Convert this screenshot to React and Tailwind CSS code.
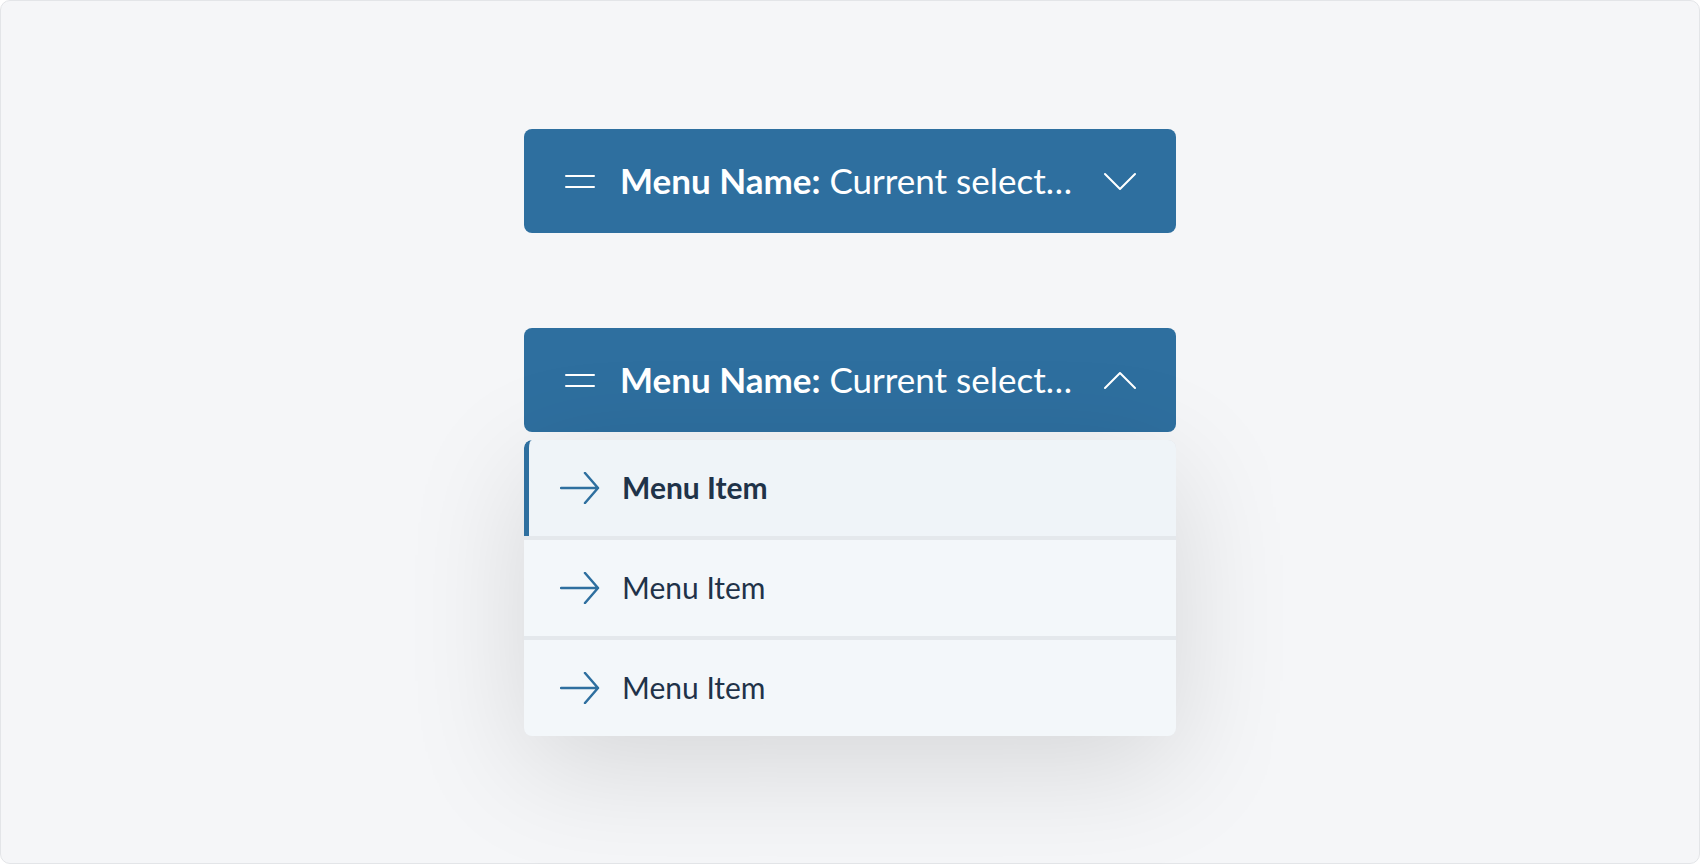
import React from 'react';

const font = { fontFamily: 'Lato, "Open Sans", sans-serif' };

const Hamburger = () => (
  <svg width="32" height="32" viewBox="0 0 32 32" className="shrink-0">
    <path d="M2 11H30M2 22H30" stroke="white" strokeWidth="2" strokeLinecap="round" />
  </svg>
);

const Chevron = ({ up }) => (
  <svg width="32" height="32" viewBox="0 0 32 32" className="shrink-0">
    <path
      d={up ? 'M1 24L16 9L31 24' : 'M1 9L16 24L31 9'}
      fill="none"
      stroke="white"
      strokeWidth="2"
      strokeLinecap="round"
      strokeLinejoin="round"
    />
  </svg>
);

const Arrow = () => (
  <svg width="40" height="32" viewBox="0 0 40 32" className="shrink-0">
    <path
      d="M1 16H38M25 1L38 16L25 31"
      fill="none"
      stroke="#2e6f9f"
      strokeWidth="2.5"
      strokeLinecap="round"
      strokeLinejoin="round"
    />
  </svg>
);

const MenuButton = ({ open }) => (
  <button className="flex h-[104px] w-full items-center gap-6 rounded-lg bg-[#2e6f9f] px-10 text-left text-white">
    <Hamburger />
    <span className="flex-1 whitespace-nowrap text-[35px] leading-none">
      <span className="font-bold">Menu Name:</span> Current select…
    </span>
    <Chevron up={open} />
  </button>
);

const MenuItem = ({ active }) => (
  <div
    className={`flex h-[96px] items-center gap-[22px] pl-9 text-[30px] text-[#1f3349] ${
      active ? 'rounded-t-lg border-l-[5px] border-[#2e6f9f] bg-[#eff4f8] pl-[31px] font-bold' : 'bg-[#f3f7fa]'
    }`}
  >
    <Arrow />
    <span>Menu Item</span>
  </div>
);

export default function App() {
  return (
    <div style={font} className="h-screen w-full overflow-hidden">
      <div className="flex h-[864px] flex-col items-center justify-center rounded-[10px] border border-[#e3e5e8] bg-[#f5f6f8]">
        <div className="w-[652px]">
          <MenuButton />
        </div>
        <div className="mt-[95px] w-[652px]">
          <MenuButton open />
          <div className="mt-2 flex flex-col gap-1 overflow-hidden rounded-lg bg-[#e4e8ec] shadow-[0_30px_120px_rgba(0,0,0,0.13)]">
            <MenuItem active />
            <MenuItem />
            <MenuItem />
          </div>
        </div>
      </div>
    </div>
  );
}
